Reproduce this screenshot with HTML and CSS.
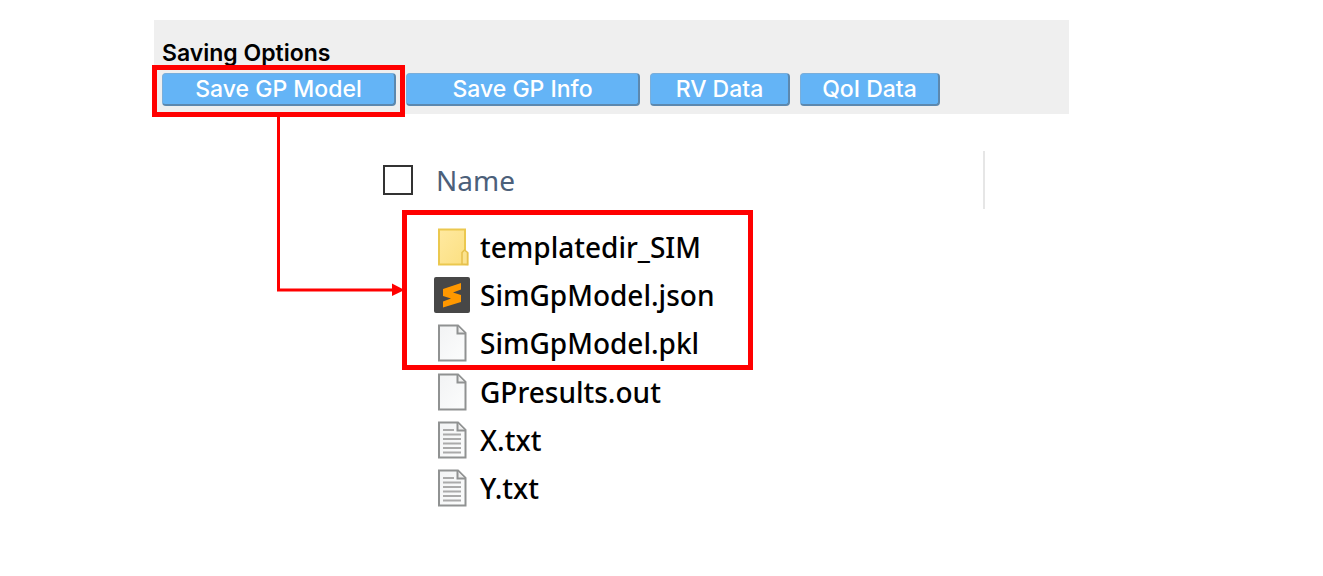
FILE: index.html
```html
<!DOCTYPE html>
<html lang="en">
<head>
<meta charset="utf-8">
<title>Saving Options</title>
<link rel="stylesheet" href="styles.css">
</head>
<body>
<svg class="defs" width="0" height="0" aria-hidden="true">
  <linearGradient id="paper" x1="0" y1="0" x2="1" y2="1"><stop offset="0" stop-color="#f2f3f4"/><stop offset="1" stop-color="#fcfdfd"/></linearGradient>
  <linearGradient id="fold" x1="0" y1="0" x2="1" y2="1"><stop offset="0" stop-color="#ffe9a0"/><stop offset="1" stop-color="#fbdf80"/></linearGradient>
  <symbol id="file" viewBox="0 0 36 38">
    <path d="M5 1.500H24L31.500 9V36.500H5Z" fill="url(#paper)" stroke="#909292" stroke-width="2"/>
    <path d="M23.500 2V9.500H31" fill="#eee" stroke="#909292" stroke-width="2"/>
  </symbol>
</svg>
<main class="figure">
  <section class="options">
    <h1 class="title">Saving Options</h1>
    <div class="buttons">
      <div class="marked marked-button"><button class="save wide" type="button">Save GP Model</button></div>
      <button class="save wide" type="button">Save GP Info</button>
      <button class="save" type="button">RV Data</button>
      <button class="save" type="button">QoI Data</button>
    </div>
  </section>
  <svg class="connector" width="128" height="180" viewBox="0 0 128 180" aria-hidden="true">
    <path d="M1.500 0V174H116" fill="none" stroke="#f00" stroke-width="3"/>
    <path d="M115 167.500L127.500 174L115 180Z" fill="#f00"/>
  </svg>
  <section class="explorer">
    <div class="header">
      <input class="check" type="checkbox" id="all">
      <label class="name" for="all">Name</label>
    </div>
    <ul class="files marked marked-files">
      <li class="file"><svg class="icon" viewBox="0 0 36 38"><path d="M5 1.500H31V23L33.500 25V36.500H5Z" fill="url(#fold)" stroke="#ebc84f" stroke-width="2"/><path d="M28 36V24.500L30.500 22L33.500 24.500V36.500Z" fill="#fbe38f" stroke="#e6c04c" stroke-width="1.500"/></svg>templatedir_SIM</li>
      <li class="file"><svg class="icon" viewBox="0 0 36 38"><rect x="0" y="1" width="36" height="36" rx="2" fill="#474747"/><path d="M9 13L27 7V13.500L19 16.500L27 19V26L9 31.500V25.500L17 22.500L9 20Z" fill="#ff9800"/></svg>SimGpModel.json</li>
      <li class="file"><svg class="icon"><use href="#file"/></svg>SimGpModel.pkl</li>
    </ul>
    <ul class="files">
      <li class="file"><svg class="icon"><use href="#file"/></svg>GPresults.out</li>
      <li class="file"><svg class="icon" viewBox="0 0 36 38"><use href="#file"/><path d="M9 9H20M9 13.500H27M9 18H27M9 22.500H27M9 27H27M9 31.500H27" stroke="#aaa" stroke-width="2"/></svg>X.txt</li>
      <li class="file"><svg class="icon" viewBox="0 0 36 38"><use href="#file"/><path d="M9 9H20M9 13.500H27M9 18H27M9 22.500H27M9 27H27M9 31.500H27" stroke="#aaa" stroke-width="2"/></svg>Y.txt</li>
    </ul>
  </section>
</main>
</body>
</html>
```
FILE: styles.css
```css
* { box-sizing: border-box; }
body { margin: 0; background: #fff; color: #000; font-family: "Noto Sans", sans-serif; }
.defs { position: absolute; }
.figure { position: relative; padding: 20px 254px 20px 154px; }
.options { padding: 20px 8px 8px; background: #efefef; font-family: Inter, sans-serif; }
.title { margin: 0 0 6px; font-size: 23px; line-height: 27px; font-weight: 600; }
.buttons { display: flex; gap: 10px; }
.save {
  display: block;
  width: 140px;
  height: 33px;
  padding: 0;
  border: 1px solid #79aedb;
  border-right: 2px solid #5c88ae;
  border-bottom: 2px solid #5c88ae;
  border-radius: 4px;
  background: #64b4f6;
  color: #fff;
  font: 500 23px/28px Inter, sans-serif;
}
.save.wide { width: 234px; }
.marked { position: relative; }
.marked::after { content: ""; position: absolute; border: 5px solid #f00; pointer-events: none; }
.marked-button::after { inset: -8px -9px -11px -10px; }
.marked-files::after { inset: -13px 232px -3px -32px; }
.connector { position: absolute; left: 277px; top: 116px; }
.explorer { width: 831px; max-width: 100%; padding: 37px 0 0 229px; }
.header { display: flex; align-items: center; gap: 23px; height: 58px; border-right: 2px solid #e6e6e6; color: #4c607a; font-size: 28px; }
.check { appearance: none; width: 30px; height: 30px; margin: 0; border: 2px solid #333; background: #fff; }
.files { margin: 0; padding: 0; list-style: none; margin-left: 51px; }
.marked-files { margin-top: 14px; margin-bottom: 1px; }
.file { display: flex; align-items: center; gap: 10px; height: 48px; font-size: 28px; font-weight: 500; }
.icon { width: 36px; height: 38px; flex: none; }
```
